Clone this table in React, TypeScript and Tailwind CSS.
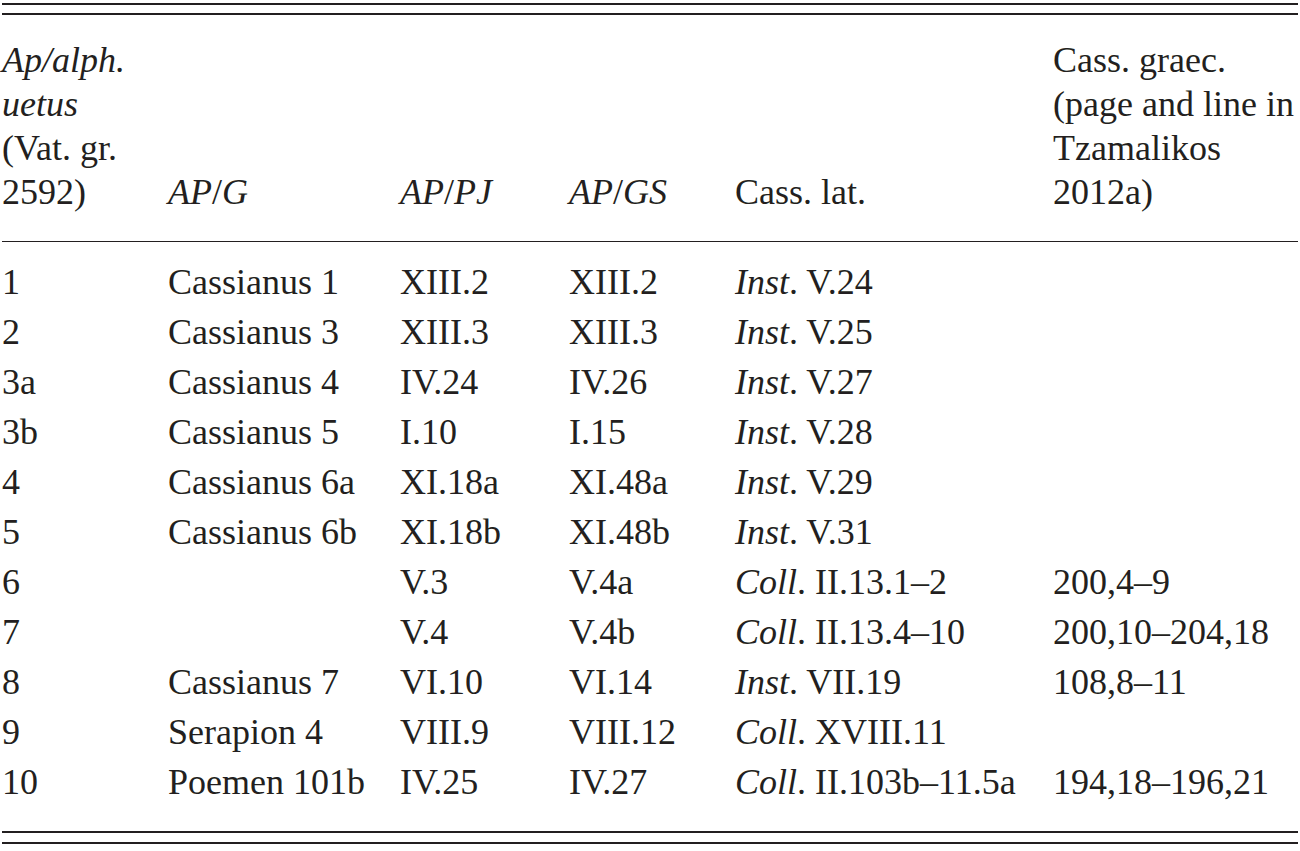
import React from "react";

type Row = [string, string, string, string, [string, string], string];

const rows: Row[] = [
  ["1", "Cassianus 1", "XIII.2", "XIII.2", ["Inst", "V.24"], ""],
  ["2", "Cassianus 3", "XIII.3", "XIII.3", ["Inst", "V.25"], ""],
  ["3a", "Cassianus 4", "IV.24", "IV.26", ["Inst", "V.27"], ""],
  ["3b", "Cassianus 5", "I.10", "I.15", ["Inst", "V.28"], ""],
  ["4", "Cassianus 6a", "XI.18a", "XI.48a", ["Inst", "V.29"], ""],
  ["5", "Cassianus 6b", "XI.18b", "XI.48b", ["Inst", "V.31"], ""],
  ["6", "", "V.3", "V.4a", ["Coll", "II.13.1–2"], "200,4–9"],
  ["7", "", "V.4", "V.4b", ["Coll", "II.13.4–10"], "200,10–204,18"],
  ["8", "Cassianus 7", "VI.10", "VI.14", ["Inst", "VII.19"], "108,8–11"],
  ["9", "Serapion 4", "VIII.9", "VIII.12", ["Coll", "XVIII.11"], ""],
  ["10", "Poemen 101b", "IV.25", "IV.27", ["Coll", "II.103b–11.5a"], "194,18–196,21"],
];

const grid = "grid grid-cols-[166px_232px_169px_166px_318px_1fr]";

export default function App() {
  return (
    <div className="min-h-[851px] w-[1300px] bg-white px-[2px] pt-[3px] text-[#231f20] font-['Liberation_Serif',serif] text-[36px] leading-[44px]">
      {/* top double rule */}
      <div className="h-[2px] bg-[#231f20]" />
      <div className="mt-[8px] h-[1.5px] bg-[#231f20]" />

      <div className={`${grid} items-end pt-[23px] pb-[27px]`}>
        <div>
          <div className="italic">Ap/alph.</div>
          <div className="italic">uetus</div>
          <div>(Vat. gr.</div>
          <div>2592)</div>
        </div>
        <div><i>AP</i>/<i>G</i></div>
        <div><i>AP</i>/<i>PJ</i></div>
        <div><i>AP</i>/<i>GS</i></div>
        <div>Cass. lat.</div>
        <div>
          <div>Cass. graec.</div>
          <div className="whitespace-nowrap">(page and line in</div>
          <div>Tzamalikos</div>
          <div>2012a)</div>
        </div>
      </div>

      <div className="h-[1.5px] bg-[#231f20]" />

      <div className="pt-[15px] pb-[24px]">
        {rows.map((r) => (
          <div key={r[0]} className={`${grid} h-[50px] items-center whitespace-nowrap`}>
            <div>{r[0]}</div>
            <div>{r[1]}</div>
            <div>{r[2]}</div>
            <div>{r[3]}</div>
            <div>
              <i>{r[4][0]}</i>. {r[4][1]}
            </div>
            <div>{r[5]}</div>
          </div>
        ))}
      </div>

      {/* bottom double rule */}
      <div className="h-[2px] bg-[#231f20]" />
      <div className="mt-[9px] h-[1.5px] bg-[#231f20]" />
    </div>
  );
}
